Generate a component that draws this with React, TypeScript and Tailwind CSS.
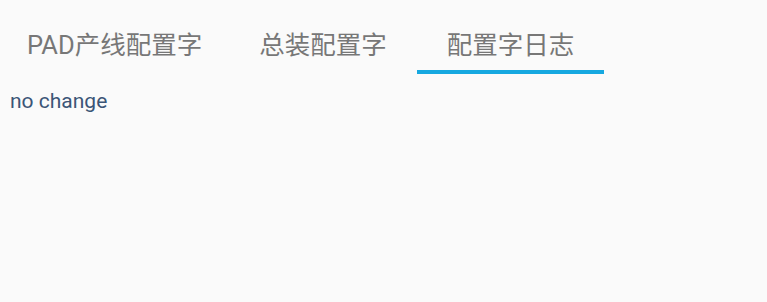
export default function App() {
  const tabs = ['PAD产线配置字', '总装配置字', '配置字日志'];
  const active = 2;
  return (
    <div
      className="w-[767px] h-[302px] bg-[#fafafa]"
      style={{ fontFamily: 'Roboto, "Noto Sans CJK SC", sans-serif' }}
    >
      <div className="flex h-[74px]">
        {tabs.map((t, i) => (
          <div
            key={t}
            className={`flex items-center justify-center text-[25.5px] leading-[30px] text-[#777777] border-b-4 ${
              i === active ? 'border-[#16a8e0]' : 'border-transparent'
            } ${i === 0 ? 'pl-[27px] pr-[27px]' : 'px-[30px]'}`}
          >
            <span className="mt-[19px]">{t}</span>
          </div>
        ))}
      </div>
      <div className="px-[10px] pt-[14px] text-[21px] leading-[26px] text-[#3b5577]">no change</div>
    </div>
  );
}
